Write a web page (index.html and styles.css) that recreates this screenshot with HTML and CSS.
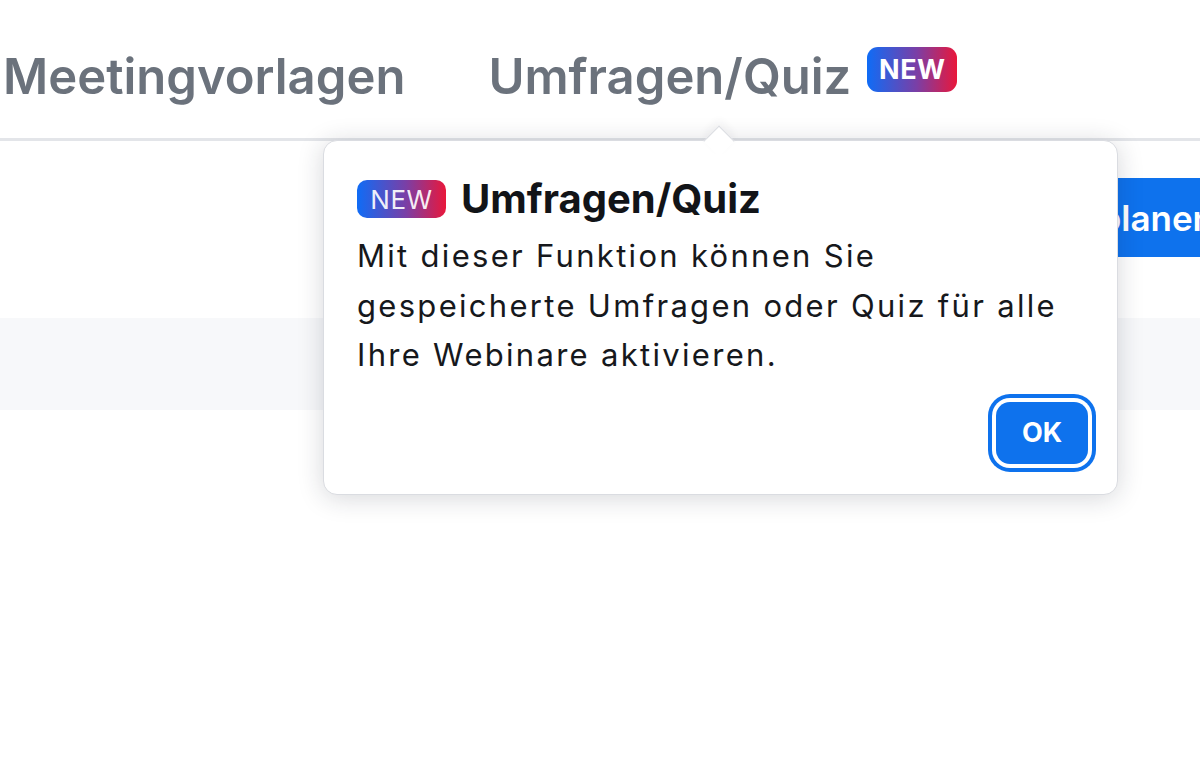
FILE: index.html
```html
<!DOCTYPE html>
<html lang="de">
<head>
<meta charset="utf-8">
<title>Umfragen/Quiz</title>
<link rel="stylesheet" href="styles.css">
</head>
<body>
<div class="page">
  <nav class="tabs">
    <div class="tab">Meetingvorlagen</div>
    <div class="tab">Umfragen/Quiz<span class="badge badge-tab">NEW</span></div>
  </nav>
  <div class="toolbar">
    <button class="primary">planen</button>
  </div>
  <div class="band"></div>

  <div class="popover">
    <div class="arrow"></div>
    <div class="pop-head">
      <span class="badge badge-pop">NEW</span>
      <span class="pop-title">Umfragen/Quiz</span>
    </div>
    <p class="pop-text">Mit dieser Funktion können Sie<br>gespeicherte Umfragen oder Quiz für alle<br>Ihre Webinare aktivieren.</p>
    <div class="pop-foot">
      <button class="ok">OK</button>
    </div>
  </div>
</div>
</body>
</html>
```
FILE: styles.css
```css
html, body {
  margin: 0;
  padding: 0;
  background: #ffffff;
}
body {
  width: 1200px;
  height: 773px;
  overflow: hidden;
  font-family: Inter, "Liberation Sans", sans-serif;
}
.page {
  position: relative;
  width: 1200px;
  height: 773px;
}
.tabs {
  display: flex;
  gap: 83px;
  padding: 47px 0 0 3px;
  height: 91px;
  border-bottom: 3px solid #e3e5e9;
}
.tab {
  display: flex;
  align-items: flex-start;
  font-size: 49px;
  line-height: 60px;
  font-weight: 600;
  color: #6b727c;
  letter-spacing: 0;
}
.badge {
  display: inline-flex;
  align-items: center;
  justify-content: center;
  color: #ffffff;
  background: linear-gradient(90deg, #0f6cf6 0%, #7a3fa6 55%, #e9173b 100%);
}
.badge-tab {
  margin-left: 16px;
  width: 90px;
  height: 45px;
  border-radius: 11px;
  font-size: 27px;
  font-weight: 700;
  letter-spacing: 0.5px;
}
.toolbar {
  display: flex;
  justify-content: flex-end;
  padding-top: 37px;
}
.primary {
  margin-right: -38px;
  height: 79px;
  padding: 0 24px;
  border: none;
  border-radius: 6px;
  background: #0e72ed;
  color: #ffffff;
  font-family: Inter, "Liberation Sans", sans-serif;
  font-size: 35px;
  font-weight: 600;
}
.band {
  margin-top: 61px;
  height: 92px;
  background: #f7f8fa;
}
.popover {
  position: absolute;
  left: 323px;
  top: 140px;
  width: 732px;
  padding: 34px 28px 30px 33px;
  background: #ffffff;
  border: 1px solid #dadce1;
  border-radius: 14px;
  box-shadow: 0 3px 26px rgba(30, 35, 50, 0.18);
}
.arrow {
  position: absolute;
  left: 384px;
  top: -11px;
  width: 21px;
  height: 21px;
  background: #ffffff;
  border-top: 1px solid #dadce1;
  border-left: 1px solid #dadce1;
  transform: rotate(45deg);
  box-shadow: -4px -4px 8px rgba(30, 35, 50, 0.05);
}
.pop-head {
  position: relative;
  display: flex;
  align-items: center;
  gap: 15px;
  height: 48px;
}
.badge-pop {
  width: 89px;
  height: 38px;
  border-radius: 10px;
  font-size: 26px;
  font-weight: 400;
  letter-spacing: 0.5px;
  color: rgba(255, 255, 255, 0.92);
}
.pop-title {
  font-size: 40px;
  line-height: 48px;
  font-weight: 700;
  color: #121418;
}
.pop-text {
  margin: 8px 0 0;
  font-size: 31px;
  line-height: 49.5px;
  color: #16181c;
  letter-spacing: 2.3px;
}
.pop-foot {
  display: flex;
  justify-content: flex-end;
  margin-top: 22px;
}
.ok {
  width: 92px;
  height: 62px;
  margin-right: 1px;
  border: none;
  border-radius: 14px;
  background: #0e72ed;
  color: #ffffff;
  font-family: Inter, "Liberation Sans", sans-serif;
  font-size: 27px;
  font-weight: 700;
  box-shadow: 0 0 0 4px #ffffff, 0 0 0 8px #0e72ed;
}
```
